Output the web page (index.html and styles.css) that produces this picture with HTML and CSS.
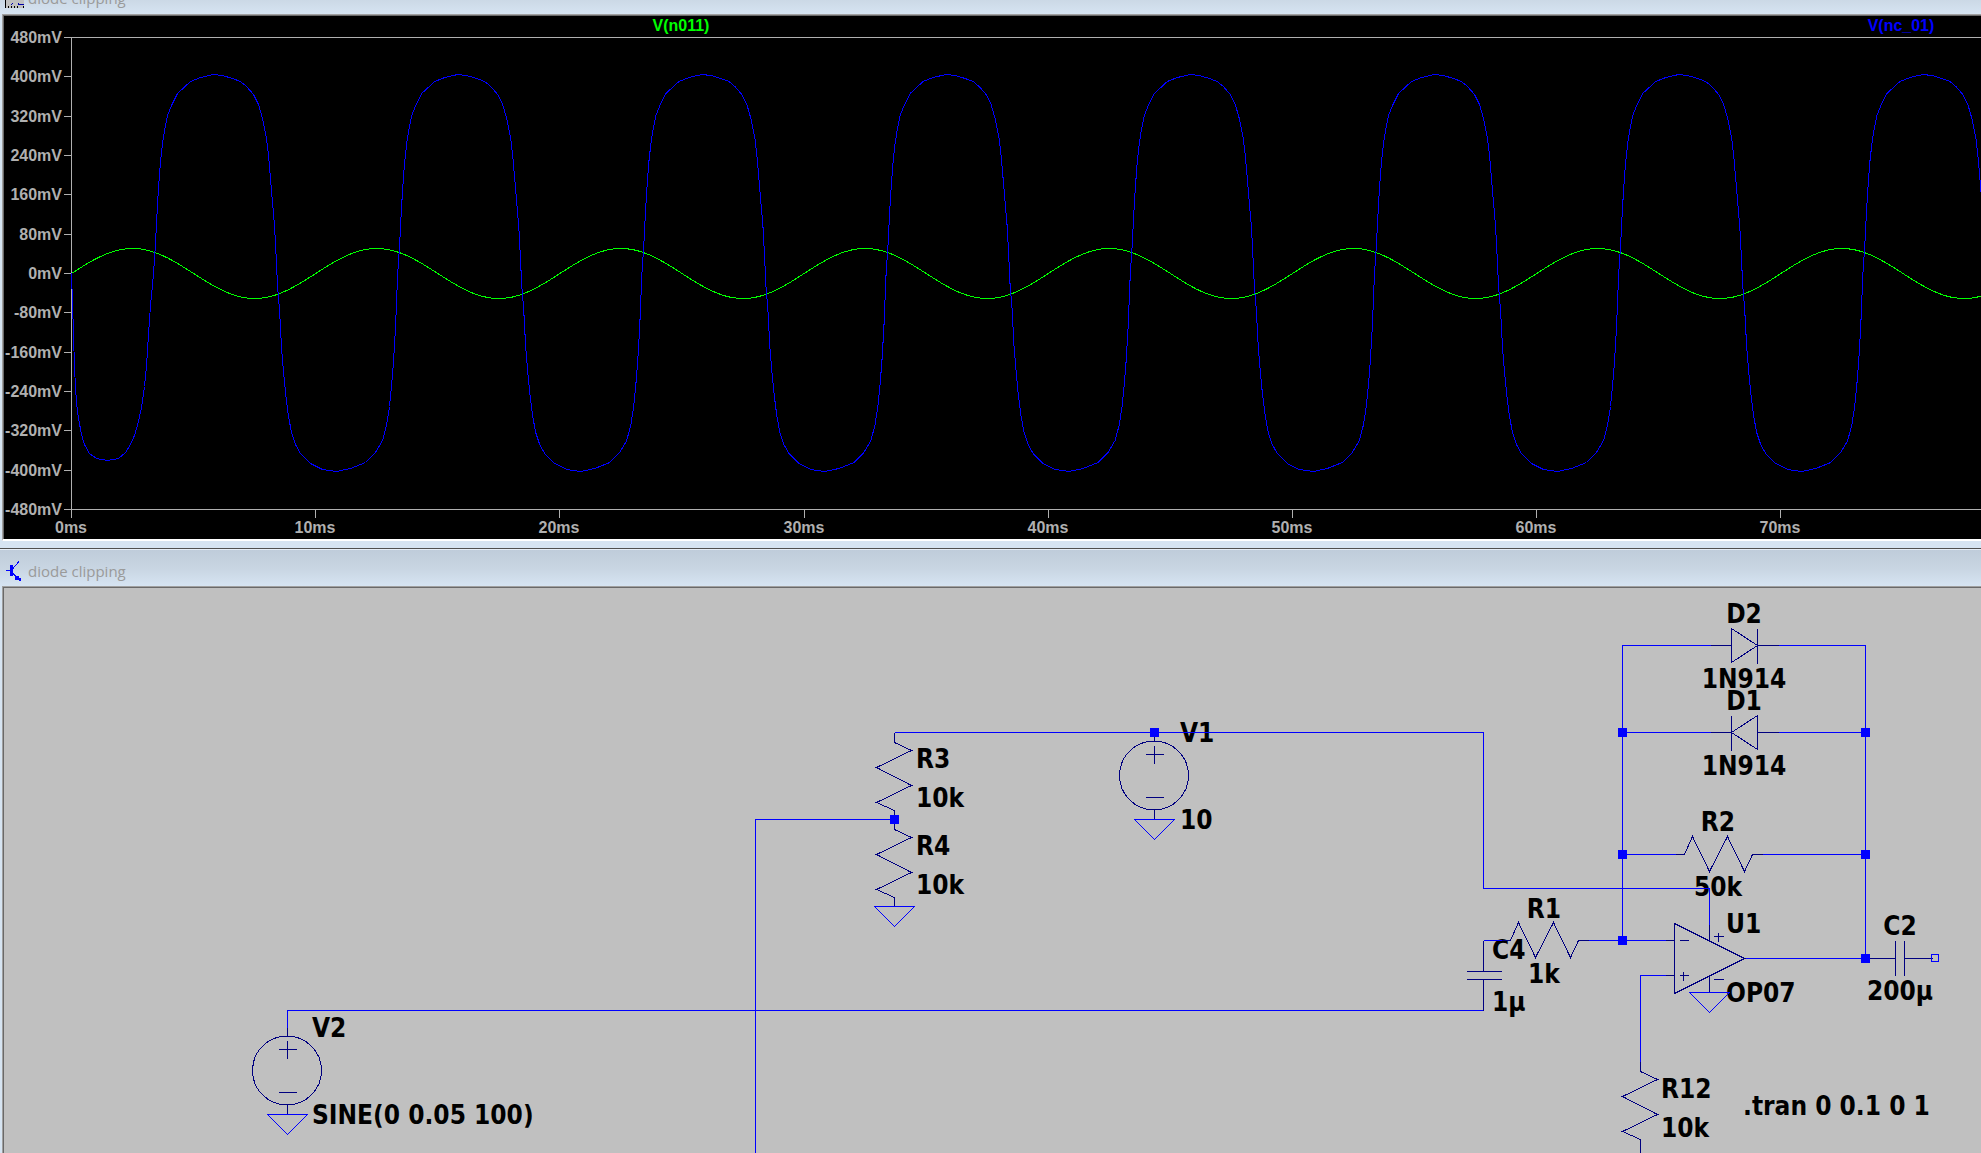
FILE: index.html
```html
<!DOCTYPE html>
<html lang="en">
  <head>
    <meta charset="UTF-8" />
    <meta name="viewport" content="width=device-width, initial-scale=1.0" />
    <title>diode clipping</title>
    <link rel="stylesheet" href="styles.css">
  </head>
  <body>
    <div class="window wave">
      <div class="titlebar">
        <svg class="icon" width="20" height="20">
          <rect x="1" width="18" height="20" fill="#c0c0c0" />
          <path d="M.5 0V20M3.5 18v2M6.5 18v2M9.5 18v2M12.5 18v2M18.5 18v2" stroke="#000" />
          <path d="M9 11.5h3M16 11.5h1" stroke="#f00" />
          <path d="M6 16.5h1M7 15.5h1M13 15.5h1M13 16.5h6" stroke="#00a" />
        </svg>
        <span>diode clipping</span>
      </div>
      <div class="client">
        <svg class="plot">
          <g class="labels" id="labels"></g>
          <g transform="translate(.5 .5)">
            <path class="axis" id="axis" />
            <path class="trace green" id="input" />
            <path class="trace blue" id="output" />
          </g>
          <text class="name green" x="677" y="15">V(n011)</text>
          <text class="name blue" x="1897" y="15">V(nc_01)</text>
        </svg>
      </div>
    </div>

    <div class="window schematic">
      <div class="titlebar">
        <svg class="icon" width="20" height="20">
          <path d="M5 4h3v11h-3zM1 9h4v1h-4zM10 15h4v4h-4zM13 17h3v2l-1 1z" fill="#00f" />
          <path d="M8 7.500L14 .5M8 12.500L15 19.500" stroke="#00f" />
        </svg>
        <span>diode clipping</span>
      </div>
      <div class="client">
        <svg class="sheet">
          <defs>
            <path id="res" d="M0 0V10L17 18L-18 35L17 53L-18 70L0 78V87" />
            <path id="gnd" class="wire" d="M-20 0H20L0 20Z" />
            <path id="src" d="M0 -43V-35M0 34V44M-9 -21H9M0 -30V-12M-9 22H9M-35 0A34.500 34.500 0 0 1 34 0A34.500 34.500 0 0 1 -35 0" />
            <path id="diode" d="M-34 0H-13M-13 -17V17L13 0ZM13 -17V18M13 0H34" />
            <rect id="node" x="-4" y="-4" width="9" height="9" />
          </defs>

          <g class="text" transform="translate(-4 -588)">
            <text x="312" y="1037">V2</text>
            <text x="312" y="1124">SINE(0 0.05 100)</text>
            <text x="916" y="768">R3</text>
            <text x="916" y="807">10k</text>
            <text x="916" y="855">R4</text>
            <text x="916" y="894">10k</text>
            <text x="1180" y="742">V1</text>
            <text x="1180" y="829">10</text>
            <text x="1492" y="959">C4</text>
            <text x="1492" y="1011">1µ</text>
            <text class="mid" x="1544" y="918">R1</text>
            <text class="mid" x="1544" y="983">1k</text>
            <text class="mid" x="1744" y="623">D2</text>
            <text class="mid" x="1744" y="688">1N914</text>
            <text class="mid" x="1744" y="710">D1</text>
            <text class="mid" x="1744" y="775">1N914</text>
            <text class="mid" x="1718" y="831">R2</text>
            <text class="mid" x="1718" y="896">50k</text>
            <text x="1726" y="933">U1</text>
            <text x="1726" y="1002">OP07</text>
            <text class="mid" x="1900" y="935">C2</text>
            <text class="mid" x="1900" y="1000">200µ</text>
            <text x="1661" y="1098">R12</text>
            <text x="1661" y="1137">10k</text>
            <text x="1743" y="1115">.tran 0 0.1 0 1</text>
          </g>

          <g transform="translate(-3.5 -587.5)">
            <!-- nets -->
            <path class="wire" d="M287 1028V1010H1483
              M755 1160V819H894
              M894 732H1483V888H1709V924
              M1483 940H1502M1588 940H1665
              M1622 940V645H1710M1778 645H1865V958
              M1622 732H1710M1778 732H1865
              M1622 854H1676M1761 854H1865
              M1744 958H1865
              M1640 1063V975H1665" />

            <!-- components -->
            <g class="part">
              <use href="#src" x="287" y="1070" />
              <use href="#src" x="1154" y="775" />
              <use href="#res" x="894" y="732" />
              <use href="#res" x="894" y="819" />
              <use href="#res" x="1640" y="1061" />
              <path d="M1640 1148V1160" />
              <use href="#res" transform="translate(1588 940) rotate(90)" />
              <use href="#res" transform="translate(1762 854) rotate(90)" />
              <use href="#diode" x="1744" y="645" />
              <use href="#diode" transform="translate(1744 732) scale(-1 1)" />
              <!-- C4, C2 -->
              <path d="M1483 940V971M1466 971H1501M1466 979H1501M1483 979V1010" />
              <path d="M1865 958H1895M1895 940V975M1904 940V975M1904 958H1932" />
              <!-- U1 -->
              <path d="M1674 923V993L1744 958ZM1665 940H1674M1665 975H1674M1709 924V940M1709 975V992
                M1679 940H1688M1679 975H1688M1683 971V980M1713 936H1723M1718 932V941M1713 979H1723" />
            </g>

            <use href="#gnd" x="287" y="1114" />
            <use href="#gnd" x="1154" y="819" />
            <use href="#gnd" x="894" y="906" />
            <use href="#gnd" x="1709" y="992" />
            <rect class="wire" x="1931" y="954" width="7" height="7" />
          </g>

          <g class="nodes" transform="translate(-4 -588)">
            <use href="#node" x="1154" y="732" />
            <use href="#node" x="894" y="819" />
            <use href="#node" x="1622" y="732" />
            <use href="#node" x="1622" y="854" />
            <use href="#node" x="1622" y="940" />
            <use href="#node" x="1865" y="732" />
            <use href="#node" x="1865" y="854" />
            <use href="#node" x="1865" y="958" />
          </g>
        </svg>
      </div>
    </div>

    <script src="script.js"></script>
  </body>
</html>
```

FILE: styles.css
```css
body {
  margin: 0;
  height: 100vh;
  display: flex;
  flex-direction: column;
  overflow: hidden;
  background: #d6e4f2;
  font-family: "Open Sans", sans-serif;
}

.window {
  display: flex;
  flex-direction: column;
}
.wave {
  margin-top: -24px;
  padding-bottom: 7px;
}
.schematic {
  flex: 1;
  min-height: 0;
  border-top: 1px solid #505050;
}

.titlebar {
  box-sizing: border-box;
  height: 38px;
  padding: 5px 5px 0;
  border-top: 1px solid #e6eef7;
  display: flex;
  align-items: center;
  gap: 3px;
  background: linear-gradient(#bfccda, #c8d5e2 50%, #d6e4f2);
  color: #9a9a9a;
  font-size: 15px;
  line-height: 20px;
}
.schematic .titlebar {
  height: 37px;
}
.icon {
  flex: none;
  shape-rendering: crispEdges;
}

.client {
  margin-left: 2px;
  border-top: 1px solid #a0a0a0;
  border-left: 1px solid #a0a0a0;
}
.schematic .client {
  flex: 1;
  min-height: 0;
}
.client > svg {
  display: block;
  box-sizing: border-box;
  width: 100%;
  border-top: 1px solid #696969;
  border-left: 1px solid #696969;
}

.plot {
  height: 524px;
  background: #000;
}
.wave .client {
  border-bottom: 2px solid #fff;
}
.plot text {
  font: bold 16px "Liberation Sans", sans-serif;
  fill: #b0b0b0;
  text-anchor: middle;
}
.plot .volts {
  text-anchor: end;
}
.plot text.green {
  fill: #0f0;
}
.plot text.blue {
  fill: #00f;
}
.axis,
.trace {
  fill: none;
  stroke: #b0b0b0;
  shape-rendering: crispEdges;
}
.trace.green {
  stroke: #0f0;
}
.trace.blue {
  stroke: #00f;
}

.sheet {
  height: 100%;
  background: #c0c0c0;
  overflow: hidden;
}
.text {
  font: bold 26px "DejaVu Sans Condensed", "DejaVu Sans", sans-serif;
}
.mid {
  text-anchor: middle;
}
.wire,
.part {
  fill: none;
  stroke: #00f;
  shape-rendering: crispEdges;
}
.part {
  stroke: #000080;
}
.nodes {
  fill: #00f;
}
```

FILE: script.js
```js
const left = 67
const top0 = 21
const zero = 257
const bottom = 493
const period = 244.2
const cycles = 8

const labels = document.querySelector('#labels')

const addLabel = (x, y, text, cls) => {
  const el = document.createElementNS('http://www.w3.org/2000/svg', 'text')
  el.setAttribute('x', x)
  el.setAttribute('y', y)
  el.setAttribute('class', cls)
  el.textContent = text
  labels.appendChild(el)
}

// axes and ticks
let axis = `M3000 ${top0}H${left}V${bottom + 8}M${left} ${bottom}H3000`
for (let mv = 480; mv >= -480; mv -= 80) {
  const y = Math.round(zero - (mv * 236) / 480)
  axis += `M${left - 8} ${y}H${left}`
  addLabel(left - 9, y + 6, `${mv}mV`, 'volts')
}
for (let i = 0; i < cycles; i++) {
  const x = Math.round(left + i * period)
  axis += `M${x} ${bottom}V${bottom + 8}`
  addLabel(x, bottom + 24, `${i * 10}ms`, 'time')
}
document.querySelector('#axis').setAttribute('d', axis)

// V(n011)
let sine = `M${left} ${zero}`
for (let x = 0; x < period * cycles; x += 3) {
  sine += `L${left + x} ${(zero - 25 * Math.sin((x / period) * 2 * Math.PI)).toFixed(1)}`
}
document.querySelector('#input').setAttribute('d', sine)

// V(nc_01): start-up dip, then one clipped cycle repeated
const start = [
  [0, 0], [1, 30], [2, 60], [3, 95], [5, 130], [7, 145], [10, 161], [13, 171], [18, 180], [25, 185],
  [36, 187], [47, 185], [54, 179], [59, 171], [63, 162], [67, 148], [70, 134], [73, 113], [75, 93],
  [77, 61], [79, 32], [81, 12]
]
const cycle = [
  [82, 0], [84, -30], [85, -50], [86, -69], [87, -85], [88, -99], [89, -112], [91, -130], [93, -143],
  [96, -158], [100, -168], [106, -180], [119, -192], [129, -196], [142, -199], [151, -198], [161, -195],
  [169, -192], [175, -187], [182, -179], [187, -169], [191, -155], [195, -135], [197, -118], [199, -95],
  [201, -71], [203, -48], [204, -30], [205, -10], [206, 12], [208, 36], [209, 55], [210, 74], [212, 98],
  [214, 119], [217, 143], [220, 159], [224, 171], [229, 180], [239, 190], [251, 196], [265, 198],
  [279, 195], [294, 189], [304, 179], [311, 167], [315, 152], [318, 133], [320, 113], [322, 88], [324, 54]
]
let points = [...start]
for (let i = 0; i < cycles; i++) {
  cycle.forEach(([x, y]) => points.push([x + i * period, y]))
}
points = points.map(([x, y]) => `${(left + x).toFixed(1)} ${zero + y}`)
document.querySelector('#output').setAttribute('d', 'M' + points.join('L'))
```
